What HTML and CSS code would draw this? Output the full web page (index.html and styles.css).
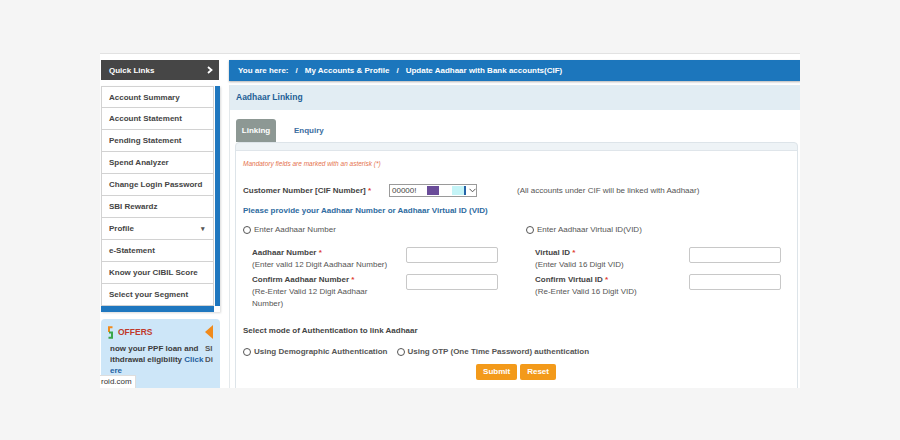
FILE: index.html
```html
<!DOCTYPE html>
<html lang="en">
<head>
<meta charset="utf-8">
<title>Update Aadhaar with Bank accounts</title>
<link rel="stylesheet" href="styles.css">
</head>
<body>
<div class="page">
  <aside class="sidebar">
    <div class="ql-head">
      <span>Quick Links</span>
      <svg class="ql-chev" width="6" height="8" viewBox="0 0 6 8"><path d="M1 1 L4.5 4 L1 7" fill="none" stroke="#fff" stroke-width="1.8"/></svg>
    </div>
    <div class="ql-list">
      <ul class="ql-items">
        <li>Account Summary</li>
        <li>Account Statement</li>
        <li>Pending Statement</li>
        <li>Spend Analyzer</li>
        <li>Change Login Password</li>
        <li>SBI Rewardz</li>
        <li class="has-caret">Profile <span class="caret">&#9662;</span></li>
        <li>e-Statement</li>
        <li>Know your CIBIL Score</li>
        <li>Select your Segment</li>
      </ul>
      <div class="ql-scroll"></div>
    </div>
    <div class="offers">
      <div class="offers-head">
        <svg class="offers-icon" width="5" height="13" viewBox="0 0 5 13"><path d="M4.5 1.2 H1 V6" fill="none" stroke="#f08a1c" stroke-width="2"/><path d="M1 6.5 H4 V11.8 H0.5" fill="none" stroke="#3aa64a" stroke-width="2"/></svg>
        <span class="offers-title">OFFERS</span>
        <span class="offers-arrow"></span>
      </div>
      <div class="offers-body">
        <div class="offers-col">
          <div>now your PPF loan and</div>
          <div>ithdrawal eligibility <span class="link">Click</span></div>
          <div class="link">ere</div>
        </div>
        <div class="offers-col2">
          <div>SI</div>
          <div>Di</div>
        </div>
      </div>
    </div>
  </aside>

  <main class="main">
    <div class="crumb">
      <span>You are here:</span><span class="sep">/</span><span>My Accounts &amp; Profile</span><span class="sep">/</span><span>Update Aadhaar with Bank accounts(CIF)</span>
    </div>
    <section class="panel">
      <div class="panel-head">Aadhaar Linking</div>
      <div class="panel-body">
        <div class="tabs">
          <span class="tab active">Linking</span>
          <span class="tab">Enquiry</span>
        </div>
        <div class="formbox">
          <div class="form">
            <p class="mandatory">Mandatory fields are marked with an asterisk (*)</p>
            <div class="cif-row">
              <span class="cif-label">Customer Number [CIF Number] <span class="req">*</span></span>
              <span class="select">
                <span class="sel-text">00000!</span>
                <span class="mask mask-purple"></span>
                <span class="mask mask-cyan"></span>
                <span class="mask mask-blue"></span>
                <svg class="sel-arrow" width="7" height="5" viewBox="0 0 7 5"><path d="M0.5 0.8 L3.5 3.8 L6.5 0.8" fill="none" stroke="#555" stroke-width="1"/></svg>
              </span>
              <span class="cif-note">(All accounts under CIF will be linked with Aadhaar)</span>
            </div>
            <p class="section-title">Please provide your Aadhaar Number or Aadhaar Virtual ID (VID)</p>
            <div class="id-grid">
              <div class="id-col">
                <label class="radio"><span class="circle"></span>Enter Aadhaar Number</label>
                <div class="fields">
                  <div class="field-label"><b>Aadhaar Number <span class="req">*</span></b><span>(Enter valid 12 Digit Aadhaar Number)</span></div>
                  <span class="input"></span>
                  <div class="field-label"><b>Confirm Aadhaar Number <span class="req">*</span></b><span>(Re-Enter Valid 12 Digit Aadhaar Number)</span></div>
                  <span class="input"></span>
                </div>
              </div>
              <div class="id-col">
                <label class="radio"><span class="circle"></span>Enter Aadhaar Virtual ID(VID)</label>
                <div class="fields">
                  <div class="field-label"><b>Virtual ID <span class="req">*</span></b><span>(Enter Valid 16 Digit VID)</span></div>
                  <span class="input"></span>
                  <div class="field-label"><b>Confirm Virtual ID <span class="req">*</span></b><span>(Re-Enter Valid 16 Digit VID)</span></div>
                  <span class="input"></span>
                </div>
              </div>
            </div>
            <p class="auth-title">Select mode of Authentication to link Aadhaar</p>
            <div class="auth-row">
              <label class="radio bold"><span class="circle"></span>Using Demographic Authentication</label>
              <label class="radio bold"><span class="circle"></span>Using OTP (One Time Password) authentication</label>
            </div>
            <div class="buttons">
              <span class="btn">Submit</span>
              <span class="btn">Reset</span>
            </div>
          </div>
        </div>
      </div>
    </section>
  </main>
  <div class="status">roid.com</div>
</div>
</body>
</html>
```

FILE: styles.css
```css
* { box-sizing: border-box; }
html, body { margin: 0; padding: 0; }
body {
  background: #f5f5f5;
  font-family: "Liberation Sans", Arial, sans-serif;
  font-size: 8px;
  color: #444;
}
p { margin: 0; }

.page {
  position: relative;
  margin: 53px 0 0 100px;
  width: 700px;
  height: 335px;
  background: #fff;
  border-top: 1px solid #e2e2e2;
  overflow: hidden;
  display: flex;
  align-items: flex-start;
  padding-top: 6px;
}

/* sidebar */
.sidebar {
  width: 119px;
  margin-left: 1px;
  flex: none;
}
.ql-head {
  height: 20px;
  background: #464646;
  color: #fff;
  font-weight: bold;
  display: flex;
  align-items: center;
  justify-content: space-between;
  padding: 0 6px 0 8px;
  margin-right: 1px;
}
.ql-list {
  margin-top: 6px;
  display: flex;
  align-items: flex-start;
  box-shadow: 1px 1px 2px rgba(0,0,0,0.15);
}
.ql-items {
  list-style: none;
  margin: 0;
  padding: 0;
  width: 113px;
  border-bottom: 6px solid #1f77bf;
}
.ql-items li {
  height: 22px;
  line-height: 21px;
  padding-left: 7px;
  border: 1px solid #d2d2d2;
  border-top: none;
  font-weight: bold;
  color: #444;
  display: flex;
  justify-content: space-between;
  padding-right: 8px;
}
.ql-items li:first-child { border-top: 1px solid #d2d2d2; }
.caret { font-size: 7px; color: #555; }
.ql-scroll {
  width: 5px;
  height: 220px;
  background: #1f77bf;
  margin-left: 1px;
}

.offers {
  margin-top: 7px;
  height: 80px;
  background: #cde6f8;
  border-radius: 4px 4px 0 0;
  padding: 6px 0 0 7px;
  overflow: hidden;
}
.offers-head {
  display: flex;
  align-items: center;
  height: 14px;
}
.offers-title {
  margin-left: 5px;
  color: #c0392b;
  font-weight: bold;
  font-size: 8.5px;
  flex: 1;
}
.offers-arrow {
  width: 0; height: 0;
  border-top: 7px solid transparent;
  border-bottom: 7px solid transparent;
  border-right: 8px solid #f08a1c;
  margin-right: 7px;
}
.offers-body {
  display: flex;
  margin-top: 4px;
  font-weight: bold;
  color: #3b3b3b;
  line-height: 11px;
  margin-left: 2px;
}
.offers-col { width: 94px; white-space: nowrap; overflow: hidden; }
.offers-col2 { width: 10px; overflow: hidden; color: #555; margin-left: 1px; }
.link { color: #1f5f9f; }

.status {
  position: absolute;
  left: 0;
  bottom: 0;
  height: 13px;
  width: 36px;
  background: #fff;
  border-top: 1px solid #ddd;
  border-right: 1px solid #ddd;
  padding-left: 1px;
  line-height: 12px;
  color: #333;
}

/* main */
.main {
  margin-left: 9px;
  width: 572px;
  flex: none;
}
.crumb {
  height: 21px;
  background: #1c76bc;
  color: #fff;
  font-weight: bold;
  display: flex;
  align-items: center;
  padding-left: 9px;
  box-shadow: 0 1px 2px rgba(0,0,0,0.3);
}
.sep { margin: 0 7px; }

.panel {
  margin-top: 4px;
  border-left: 1px solid #e3e8eb;
}
.panel-head {
  height: 25px;
  background: #e2edf3;
  color: #1e5f96;
  font-weight: bold;
  font-size: 8.5px;
  line-height: 25px;
  padding-left: 6px;
}
.panel-body {
  padding: 9px 3px 0 5px;
}
.tabs {
  display: flex;
  height: 23px;
  align-items: stretch;
  padding-left: 1px;
}
.tab {
  display: flex;
  align-items: center;
  justify-content: center;
  font-weight: bold;
  color: #3a6e9f;
  padding: 0 0 0 18px;
}
.tab.active {
  width: 40px;
  padding: 0;
  background: #8d9894;
  color: #fff;
  border-radius: 3px 3px 0 0;
}

.formbox {
  border: 1px solid #dde4e9;
  border-radius: 4px 4px 0 0;
  background: #eef3f6;
  padding-top: 7px;
}
.form {
  background: #fff;
  border-top: 1px solid #dfe5ea;
  padding: 8px 0 0 7px;
  height: 240px;
}
.mandatory {
  font-style: italic;
  font-size: 6.5px;
  color: #e5734d;
  line-height: 10px;
}
.req { color: #e03c31; }

.cif-row {
  margin-top: 14px;
  display: flex;
  align-items: center;
  height: 14px;
}
.cif-label {
  width: 146px;
  font-weight: bold;
  color: #444;
}
.select {
  position: relative;
  width: 88px;
  height: 13px;
  border: 1px solid #9a9a9a;
  display: flex;
  align-items: center;
  padding-left: 2px;
}
.sel-text { color: #444; width: 35px; }
.mask { height: 9px; }
.mask-purple { width: 12px; background: #6a4c99; }
.mask-cyan { width: 12px; background: #c4f4f7; margin-left: 13px; }
.mask-blue { width: 2px; background: #2563a8; }
.sel-arrow { margin-left: 3px; }
.cif-note {
  margin-left: 40px;
  color: #555;
}

.section-title {
  margin-top: 8px;
  line-height: 12px;
  font-weight: bold;
  color: #2e6ba0;
}

.id-grid {
  margin-top: 7px;
  display: grid;
  grid-template-columns: 283px 1fr;
}
.radio {
  display: flex;
  align-items: center;
  line-height: 12px;
  color: #555;
}
.radio.bold { font-weight: bold; }
.circle {
  width: 8px;
  height: 8px;
  border: 1px solid #555;
  border-radius: 50%;
  margin-right: 3px;
  flex: none;
}
.fields {
  margin-top: 11px;
  padding-left: 9px;
  display: grid;
  grid-template-columns: 154px 92px;
  row-gap: 3px;
  align-items: start;
}
.field-label {
  display: flex;
  flex-direction: column;
  line-height: 12px;
  width: 142px;
}
.field-label b { color: #444; }
.field-label span { color: #555; }
.field-label b span { color: #e03c31; }
.input {
  height: 16px;
  border: 1px solid #c8c8c8;
  border-radius: 2px;
  background: #fff;
}

.auth-title {
  margin-top: 15px;
  line-height: 12px;
  font-weight: bold;
  color: #444;
}
.auth-row {
  margin-top: 9px;
  display: flex;
  gap: 9px;
}
.buttons {
  margin-top: 6px;
  display: flex;
  justify-content: center;
  gap: 3px;
  padding-right: 8px;
}
.btn {
  height: 16px;
  line-height: 16px;
  background: #f39a1a;
  color: #fff;
  font-weight: bold;
  padding: 0 7px;
  border-radius: 2px;
}
```
